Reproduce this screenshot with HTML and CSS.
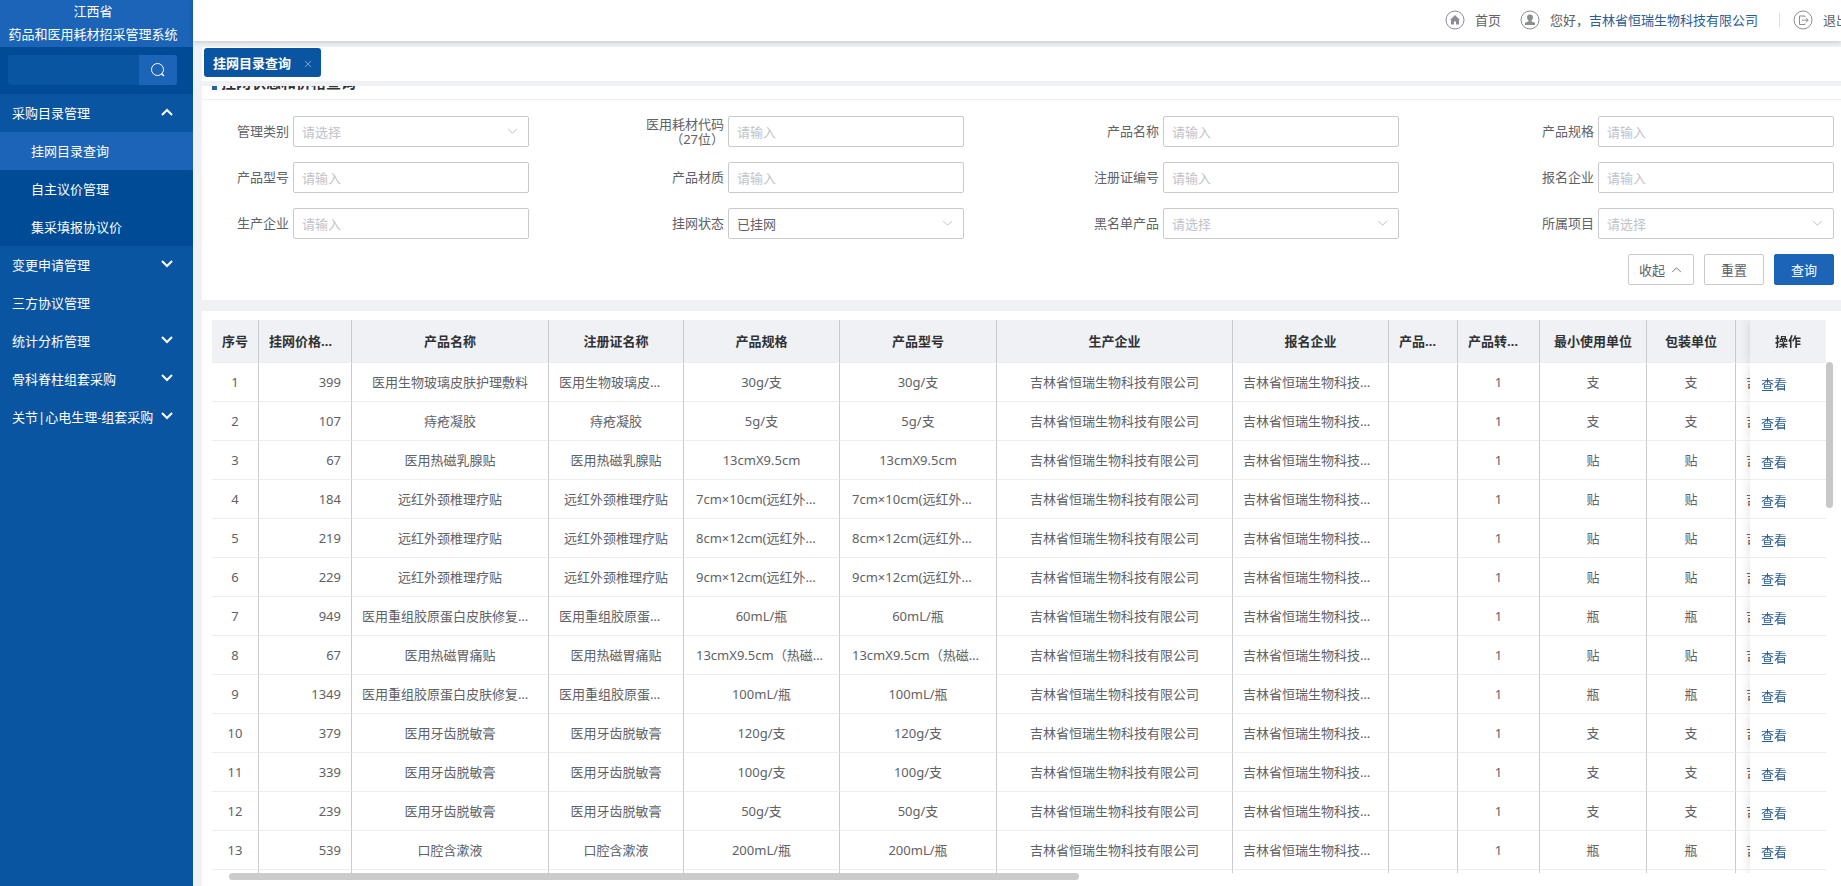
FILE: index.html
```html
<!DOCTYPE html>
<html lang="zh-CN">
<head>
<meta charset="utf-8">
<title>药品和医用耗材招采管理系统</title>
<link rel="stylesheet" href="styles.css">
</head>
<body>
<svg class="sprite" aria-hidden="true">
  <symbol id="down" viewBox="0 0 12 8"><path d="M1 1l5 5 5-5" fill="none" stroke="currentColor"/></symbol>
  <symbol id="up" viewBox="0 0 12 8"><path d="M1 7l5-5 5 5" fill="none" stroke="currentColor"/></symbol>
</svg>
<div class="app">
  <aside class="sidebar">
    <h1 class="brand">江西省<br>药品和医用耗材招采管理系统</h1>
    <form class="menu-search">
      <input type="text" aria-label="搜索菜单">
      <button type="button" aria-label="搜索">
        <svg width="16" height="16" viewBox="0 0 16 16" fill="none" stroke="currentColor"><circle cx="7.500" cy="7.500" r="6"/><path d="M11.500 11.500l2.500 2.500" stroke-width="1.500"/></svg>
      </button>
    </form>
    <nav class="menu">
      <a class="menu-item" href="#">采购目录管理<svg class="arrow"><use href="#up"/></svg></a>
      <div class="submenu">
        <a class="menu-item active" href="#">挂网目录查询</a>
        <a class="menu-item" href="#">自主议价管理</a>
        <a class="menu-item" href="#">集采填报协议价</a>
      </div>
      <a class="menu-item" href="#">变更申请管理<svg class="arrow"><use href="#down"/></svg></a>
      <a class="menu-item" href="#">三方协议管理</a>
      <a class="menu-item" href="#">统计分析管理<svg class="arrow"><use href="#down"/></svg></a>
      <a class="menu-item" href="#">骨科脊柱组套采购<svg class="arrow"><use href="#down"/></svg></a>
      <a class="menu-item" href="#">关节|心电生理-组套采购<svg class="arrow"><use href="#down"/></svg></a>
    </nav>
  </aside>

  <div class="page">
    <header class="topbar">
      <div class="user-nav">
        <a class="nav-link" href="#">
          <svg width="20" height="20" viewBox="0 0 20 20"><circle cx="10" cy="10" r="9" fill="none" stroke="currentColor"/><path d="M10 5l5 5h-1v4.500h-3v-3h-2v3H6V10H5z" fill="currentColor"/></svg>
          首页
        </a>
        <span class="nav-link">
          <svg width="20" height="20" viewBox="0 0 20 20"><circle cx="10" cy="10" r="9" fill="none" stroke="currentColor"/><path d="M10 4.500c2 0 3 1.300 3 3 0 1.200-.6 2.300-1.500 2.900v1l3.500 1.400V15H5v-2.200l3.500-1.400v-1C7.600 9.800 7 8.700 7 7.500c0-1.700 1-3 3-3z" fill="currentColor"/></svg>
          <span>您好，<a class="company" href="#">吉林省恒瑞生物科技有限公司</a></span>
        </span>
        <span class="divider"></span>
        <a class="nav-link" href="#">
          <svg width="20" height="20" viewBox="0 0 20 20" fill="none" stroke="currentColor"><circle cx="10" cy="10" r="9"/><path d="M12 7V6H6.500v8.500H12v-1M9 10.200h6M13 8l2.200 2.200L13 12.400"/></svg>
          退出
        </a>
      </div>
    </header>

    <div class="tabs">
      <div class="tab">挂网目录查询
        <button type="button" aria-label="关闭"><svg width="8" height="8" viewBox="0 0 8 8"><path d="M1 1l6 6M7 1L1 7" stroke="currentColor"/></svg></button>
      </div>
    </div>

    <main class="content">
      <section class="panel">
        <div class="panel-title"><h2>挂网状态和价格查询</h2></div>
        <form class="query">
          <div class="field"><label for="f1">管理类别</label><div class="control"><select id="f1" class="empty"><option>请选择</option></select><svg><use href="#down"/></svg></div></div>
          <div class="field"><label for="f2">医用耗材代码（27位）</label><div class="control"><input id="f2" type="text" placeholder="请输入"></div></div>
          <div class="field"><label for="f3">产品名称</label><div class="control"><input id="f3" type="text" placeholder="请输入"></div></div>
          <div class="field"><label for="f4">产品规格</label><div class="control"><input id="f4" type="text" placeholder="请输入"></div></div>
          <div class="field"><label for="f5">产品型号</label><div class="control"><input id="f5" type="text" placeholder="请输入"></div></div>
          <div class="field"><label for="f6">产品材质</label><div class="control"><input id="f6" type="text" placeholder="请输入"></div></div>
          <div class="field"><label for="f7">注册证编号</label><div class="control"><input id="f7" type="text" placeholder="请输入"></div></div>
          <div class="field"><label for="f8">报名企业</label><div class="control"><input id="f8" type="text" placeholder="请输入"></div></div>
          <div class="field"><label for="f9">生产企业</label><div class="control"><input id="f9" type="text" placeholder="请输入"></div></div>
          <div class="field"><label for="f10">挂网状态</label><div class="control"><select id="f10"><option>已挂网</option></select><svg><use href="#down"/></svg></div></div>
          <div class="field"><label for="f11">黑名单产品</label><div class="control"><select id="f11" class="empty"><option>请选择</option></select><svg><use href="#down"/></svg></div></div>
          <div class="field"><label for="f12">所属项目</label><div class="control"><select id="f12" class="empty"><option>请选择</option></select><svg><use href="#down"/></svg></div></div>
          <div class="actions">
            <button type="button" class="btn">收起<svg><use href="#up"/></svg></button>
            <button type="reset" class="btn">重置</button>
            <button type="button" class="btn primary">查询</button>
          </div>
        </form>
      </section>

      <section class="panel results">
        <div class="table-area">
          <div class="table-wrap">
            <table>
              <colgroup>
                <col class="w47"><col class="w93"><col class="w197"><col class="w135"><col class="w156"><col class="w157"><col class="w236"><col class="w156"><col class="w69"><col class="w82"><col class="w107"><col class="w89"><col class="w156"><col class="w76">
              </colgroup>
              <thead>
                <tr><th class="index">序号</th><th>挂网价格（元）</th><th>产品名称</th><th>注册证名称</th><th>产品规格</th><th>产品型号</th><th>生产企业</th><th>报名企业</th><th>产品材质</th><th>产品转换比</th><th>最小使用单位</th><th>包装单位</th><th></th><th class="fixed">操作</th></tr>
              </thead>
              <tbody id="rows"></tbody>
            </table>
          </div>
          <div class="v-track"><div class="v-thumb"></div></div>
        </div>
        <div class="h-track"><div class="h-thumb"></div></div>
      </section>
    </main>
  </div>
</div>
<script src="app.js"></script>
</body>
</html>
```
FILE: styles.css
```css
* { box-sizing: border-box; }

body {
  margin: 0;
  font: 13px/18px "Noto Sans", "Noto Sans CJK SC", sans-serif;
  color: #606266;
  background: #eff1f5;
}

a { color: inherit; text-decoration: none; }
input, select, button { font: inherit; color: inherit; }
button { cursor: pointer; }
.sprite { display: none; }

.app { display: flex; height: 100vh; overflow: hidden; }

/* Sidebar */
.sidebar { flex: 0 0 193px; min-width: 0; background: #0a55a1; color: #fff; }

.brand {
  margin: 0;
  height: 47px;
  padding-right: 7px;
  font-size: 13px;
  font-weight: 400;
  line-height: 23px;
  text-align: center;
  white-space: nowrap;
  background: #1b64b7;
}

.menu-search { display: flex; height: 47px; padding: 8px 16px 9px 8px; background: #004b95; }
.menu-search input {
  flex: 1;
  min-width: 0;
  padding: 0 8px;
  border: 0;
  border-radius: 3px 0 0 3px;
  background: #0a55a1;
}
.menu-search button {
  display: grid;
  place-items: center;
  width: 38px;
  padding: 0;
  border: 0;
  border-radius: 0 3px 3px 0;
  background: #1b64b7;
}

.menu-item {
  display: flex;
  align-items: center;
  justify-content: space-between;
  height: 38px;
  padding: 0 20px 0 12px;
  white-space: nowrap;
}
.arrow { flex: none; width: 12px; height: 8px; stroke-width: 2; margin-bottom: 2px; }
.submenu { background: #004b95; }
.submenu .menu-item { padding-left: 31px; }
.menu-item.active { background: #1b64b7; }

/* Top bar */
.page { flex: 1; min-width: 0; display: flex; flex-direction: column; }

.topbar {
  position: relative;
  display: flex;
  justify-content: flex-end;
  align-items: center;
  height: 41px;
  flex: none;
  padding-bottom: 2px;
  background: #fff;
  box-shadow: 0 1px 5px rgba(0, 21, 41, .2);
}
.user-nav { display: flex; align-items: center; margin-right: -8px; white-space: nowrap; }
.nav-link { display: flex; align-items: center; gap: 10px; margin-left: 19px; }
.nav-link svg { color: #8a8d91; }
.company { color: #2a5d95; }
.divider { width: 1px; height: 14px; margin: 0 -6px 0 21px; background: #dcdfe6; }

.tabs { flex: none; margin: 6px 0 0 9px; padding: 1px 2px 4px; background: #fff; }
.tab {
  display: inline-flex;
  align-items: center;
  gap: 13px;
  height: 29px;
  padding: 0 9px;
  border-radius: 3px;
  font-weight: 700;
  color: #fff;
  background: #0a55a1;
  vertical-align: top;
}
.tab button { display: flex; padding: 2px 0 0; border: 0; background: none; color: #7ba4d0; }

/* Panels */
.content { flex: 1; min-height: 0; display: flex; flex-direction: column; gap: 11px; margin: 5px 0 0 9px; }
.panel { background: #fff; }

.panel-title {
  display: flex;
  align-items: flex-end;
  height: 14px;
  padding: 0 10px 9px;
  overflow: hidden;
  border-bottom: 1px solid #ebeef5;
}
.panel-title h2 {
  margin: 0;
  padding-left: 4px;
  border-left: 5px solid #2460a5;
  font-size: 15px;
  line-height: 16px;
  color: #303133;
}

.query {
  display: grid;
  grid-template-columns: repeat(4, minmax(0, 1fr));
  gap: 15px 114px;
  padding: 16px 7px 15px 6px;
}
.field { display: flex; align-items: center; gap: 4px; height: 31px; }
.field label { flex: 0 0 81px; line-height: 15px; text-align: right; }
.control { position: relative; flex: 1; min-width: 0; }
.control input, .control select {
  display: block;
  width: 100%;
  height: 31px;
  padding: 0 8px;
  border: 1px solid #c8cacd;
  border-radius: 2px;
  background: #fff;
  appearance: none;
}
.control input::placeholder, .control .empty { color: #bfc3ca; }
.control svg { position: absolute; right: 11px; top: 12px; width: 11px; height: 7px; color: #b4b8bf; pointer-events: none; }

.actions { grid-column: 1 / -1; display: flex; justify-content: flex-end; gap: 10px; }
.btn {
  display: flex;
  align-items: center;
  gap: 6px;
  height: 31px;
  padding: 0 16px;
  border: 1px solid #c8cacd;
  border-radius: 2px;
  background: #fff;
}
.btn svg { width: 11px; height: 7px; }
.btn:first-child { padding: 0 11px 0 10px; }
.primary { border-color: #1b64b7; background: #1b64b7; color: #fff; }

/* Results */
.results { flex: 1; min-height: 0; display: flex; flex-direction: column; padding: 9px 8px 6px 10px; }
.table-area { flex: 1; min-height: 0; display: flex; }
.table-wrap { flex: 1; min-width: 0; overflow: hidden; }

table { width: 1756px; table-layout: fixed; border-collapse: separate; border-spacing: 0; }
.w47 { width: 47px; }
.w69 { width: 69px; }
.w76 { width: 76px; }
.w82 { width: 82px; }
.w89 { width: 89px; }
.w93 { width: 93px; }
.w107 { width: 107px; }
.w135 { width: 135px; }
.w156 { width: 156px; }
.w157 { width: 157px; }
.w197 { width: 197px; }
.w236 { width: 236px; }

th, td {
  height: 39px;
  padding: 0 10px;
  overflow: hidden;
  text-align: center;
  text-overflow: ellipsis;
  white-space: nowrap;
  border-right: 1px solid #c8cacd;
  border-bottom: 1px solid #ebeef0;
}
th { height: 43px; color: #303133; background: #eff1f5; }
.index { padding: 0; }
.price { text-align: right; }
.spec { padding: 0 12px; }
.fixed {
  position: sticky;
  right: 0;
  border-right: 0;
  background: #fff;
  box-shadow: 0 0 10px rgba(0, 0, 0, .14);
  clip-path: inset(0 0 0 -10px);
}
th.fixed { background: #eff1f5; }
td.fixed { padding: 3px 11px 0; text-align: left; color: #2a5d95; }

.v-track { flex: none; width: 7px; padding-top: 42px; }
.v-thumb { height: 146px; border-radius: 4px; background: #c8c8c8; }
.h-track { flex: none; padding-left: 17px; }
.h-thumb { width: 53%; height: 7px; border-radius: 4px; background: #cbcbcb; }
```
FILE: app.js
```js
const company = '吉林省恒瑞生物科技有限公司';

// price, product name, certificate name, specification, unit
const products = [
  [399, '医用生物玻璃皮肤护理敷料', '医用生物玻璃皮肤护理敷料', '30g/支', '支'],
  [107, '痔疮凝胶', '痔疮凝胶', '5g/支', '支'],
  [67, '医用热磁乳腺贴', '医用热磁乳腺贴', '13cmX9.5cm', '贴'],
  [184, '远红外颈椎理疗贴', '远红外颈椎理疗贴', '7cm×10cm(远红外颈椎理疗贴)', '贴'],
  [219, '远红外颈椎理疗贴', '远红外颈椎理疗贴', '8cm×12cm(远红外颈椎理疗贴)', '贴'],
  [229, '远红外颈椎理疗贴', '远红外颈椎理疗贴', '9cm×12cm(远红外颈椎理疗贴)', '贴'],
  [949, '医用重组胶原蛋白皮肤修复敷料', '医用重组胶原蛋白皮肤修复敷料', '60mL/瓶', '瓶'],
  [67, '医用热磁胃痛贴', '医用热磁胃痛贴', '13cmX9.5cm（热磁胃痛贴）', '贴'],
  [1349, '医用重组胶原蛋白皮肤修复敷料', '医用重组胶原蛋白皮肤修复敷料', '100mL/瓶', '瓶'],
  [379, '医用牙齿脱敏膏', '医用牙齿脱敏膏', '120g/支', '支'],
  [339, '医用牙齿脱敏膏', '医用牙齿脱敏膏', '100g/支', '支'],
  [239, '医用牙齿脱敏膏', '医用牙齿脱敏膏', '50g/支', '支'],
  [539, '口腔含漱液', '口腔含漱液', '200mL/瓶', '瓶']
];

const rows = products.map(([price, name, cert, spec, unit], i) => `
  <tr>
    <td class="index">${i + 1}</td>
    <td class="price">${price}</td>
    <td>${name}</td>
    <td>${cert}</td>
    <td class="spec">${spec}</td>
    <td class="spec">${spec}</td>
    <td>${company}</td>
    <td>${company}</td>
    <td></td>
    <td>1</td>
    <td>${unit}</td>
    <td>${unit}</td>
    <td>${company}</td>
    <td class="fixed"><a href="#">查看</a></td>
  </tr>`);

const blank = '<tr>' + '<td></td>'.repeat(13) + '<td class="fixed"></td></tr>';
document.getElementById('rows').innerHTML = rows.join('') + blank;
```
